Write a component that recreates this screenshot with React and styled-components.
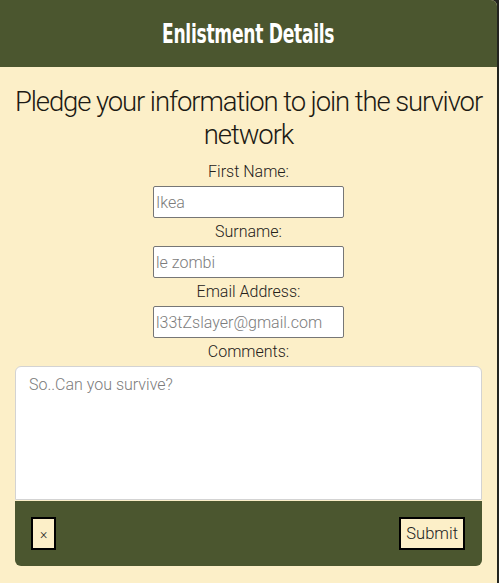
import React from "react";
import styled, { createGlobalStyle } from "styled-components";

const Global = createGlobalStyle`
  html, body { margin: 0; padding: 0; background: #23241f; }
  body { font-family: Roboto, "Noto Sans", sans-serif; }
  * { box-sizing: border-box; }
`;

const Modal = styled.div`
  width: 497px;
  height: 583px;
  background: #fcefc8;
  border-top-right-radius: 6px;
  overflow: hidden;
  display: flex;
  flex-direction: column;
`;

const Header = styled.div`
  height: 67px;
  flex: none;
  background: #4b562f;
  display: flex;
  align-items: center;
  justify-content: center;
`;

const Title = styled.h1`
  margin: 0;
  color: #fff;
  font-family: "DejaVu Sans Condensed", "DejaVu Sans", sans-serif;
  font-stretch: condensed;
  font-weight: 700;
  font-size: 27px;
  letter-spacing: -0.4px;
  transform: scaleX(0.705);
  white-space: nowrap;
`;

const Body = styled.form`
  padding: 18px 15px 0;
  display: flex;
  flex-direction: column;
  align-items: center;
`;

const Lead = styled.p`
  margin: 0 -10px 7px;
  font-family: Roboto, sans-serif;
  font-weight: 300;
  font-size: 27.5px;
  line-height: 33px;
  letter-spacing: -1.1px;
  text-align: center;
  color: #1c1a14;
`;

const Label = styled.label`
  font-family: Roboto, sans-serif;
  font-weight: 300;
  font-size: 16px;
  line-height: 28px;
  color: #24211a;
`;

const Input = styled.input`
  width: 191px;
  height: 32px;
  margin: 0;
  border: 1px solid #767676;
  border-radius: 2px;
  background: #fff;
  padding: 0 2px;
  font-family: Roboto, sans-serif;
  font-weight: 300;
  font-size: 16px;
  &::placeholder { color: #7c7c7c; }
`;

const TextArea = styled.textarea`
  width: 467px;
  height: 134px;
  margin: 0;
  display: block;
  border: 1px solid #d3d3d3;
  border-radius: 6px 6px 0 0;
  background: #fff;
  padding: 8px 13px;
  resize: none;
  font-family: Roboto, sans-serif;
  font-weight: 300;
  font-size: 16px;
  &::placeholder { color: #7c7c7c; }
`;

const Footer = styled.div`
  width: 467px;
  height: 65px;
  margin-top: 1px;
  background: #4b562f;
  border-radius: 0 0 6px 6px;
  display: flex;
  align-items: center;
  justify-content: space-between;
  padding: 0 17px 0 16px;
`;

const Button = styled.button`
  height: 33px;
  padding: 0 ${(p) => (p.$wide ? "5px" : "7px")};
  background: #fcefc8;
  border: 2px solid #000;
  border-radius: 0;
  font-family: Roboto, sans-serif;
  font-weight: 300;
  font-size: ${(p) => (p.$wide ? "16.5px" : "14px")};
  color: #222;
`;

export default function App() {
  return (
    <>
      <Global />
      <Modal>
        <Header>
          <Title>Enlistment Details</Title>
        </Header>
        <Body>
          <Lead>Pledge your information to join the survivor network</Lead>
          <Label>First Name:</Label>
          <Input placeholder="Ikea" />
          <Label>Surname:</Label>
          <Input placeholder="le zombi" />
          <Label>Email Address:</Label>
          <Input placeholder="l33tZslayer@gmail.com" />
          <Label>Comments:</Label>
          <TextArea placeholder="So..Can you survive?" />
          <Footer>
            <Button type="button">×</Button>
            <Button type="button" $wide>Submit</Button>
          </Footer>
        </Body>
      </Modal>
    </>
  );
}
